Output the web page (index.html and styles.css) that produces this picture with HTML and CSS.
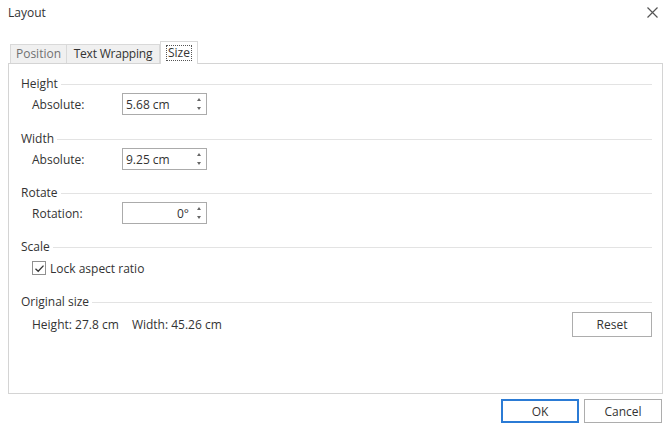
FILE: index.html
```html
<!DOCTYPE html>
<html lang="en">

<head>
    <meta charset="UTF-8">
    <meta name="viewport" content="width=device-width, initial-scale=1.0">
    <title>Layout</title>
    <link rel="stylesheet" href="styles.css">
</head>

<body>
    <div class="dialog">
        <div class="titlebar">
            <span class="title">Layout</span>
            <button class="close" aria-label="Close">
                <svg width="11" height="11" viewBox="0 0 11 11">
                    <path d="M0.5 0.5 L10.5 10.5 M10.5 0.5 L0.5 10.5" stroke="#555" stroke-width="1.2" fill="none" />
                </svg>
            </button>
        </div>

        <div class="tabs">
            <div class="tab position">Position</div>
            <div class="tab wrapping">Text Wrapping</div>
            <div class="tab active"><span class="focus">Size</span></div>
        </div>

        <div class="panel">
            <div class="group">
                <div class="group-title"><span>Height</span></div>
                <div class="row">
                    <label>Absolute:</label>
                    <div class="spin">
                        <span class="value">5.68 cm</span>
                        <span class="arrows"><i class="up"></i><i class="down"></i></span>
                    </div>
                </div>
            </div>

            <div class="group">
                <div class="group-title"><span>Width</span></div>
                <div class="row">
                    <label>Absolute:</label>
                    <div class="spin">
                        <span class="value">9.25 cm</span>
                        <span class="arrows"><i class="up"></i><i class="down"></i></span>
                    </div>
                </div>
            </div>

            <div class="group">
                <div class="group-title"><span>Rotate</span></div>
                <div class="row">
                    <label>Rotation:</label>
                    <div class="spin right">
                        <span class="value">0°</span>
                        <span class="arrows"><i class="up"></i><i class="down"></i></span>
                    </div>
                </div>
            </div>

            <div class="group scale">
                <div class="group-title"><span>Scale</span></div>
                <div class="check-row">
                    <span class="checkbox">
                        <svg width="11" height="11" viewBox="0 0 11 11">
                            <path d="M1.5 5.8 L4.2 8.3 L9.5 2.6" stroke="#333" stroke-width="1.3" fill="none" />
                        </svg>
                    </span>
                    <span>Lock aspect ratio</span>
                </div>
            </div>

            <div class="group original">
                <div class="group-title"><span>Original size</span></div>
                <div class="size-row">
                    <span class="sizes">Height:&nbsp;27.8 cm <span class="gap"></span>Width:&nbsp;45.26 cm</span>
                    <button class="btn reset">Reset</button>
                </div>
            </div>
        </div>

        <div class="footer">
            <button class="btn ok">OK</button>
            <button class="btn">Cancel</button>
        </div>
    </div>
</body>

</html>
```

FILE: styles.css
```css
body {
    margin: 0;
    background: #ffffff;
    font-family: "Open Sans", "Noto Sans", sans-serif;
    font-size: 12px;
    color: #333;
}

.dialog {
    width: 670px;
    height: 428px;
}

.titlebar {
    height: 24px;
    display: flex;
    align-items: center;
    justify-content: space-between;
    padding: 0 12px 0 8px;
}

.title {
    color: #333;
}

.close {
    border: none;
    background: none;
    padding: 0;
    width: 11px;
    height: 11px;
    display: flex;
}

.tabs {
    display: flex;
    align-items: flex-end;
    margin: 17px 0 0 10px;
    height: 22px;
    position: relative;
    z-index: 1;
}

.tab {
    height: 19px;
    line-height: 18px;
    padding: 0 4px;
    background: #f0f0f0;
    border: 1px solid #d9d9d9;
    border-bottom: none;
    box-sizing: border-box;
    color: #333;
    white-space: nowrap;
    text-align: center;
}

.tab.position {
    width: 57px;
    color: #707070;
}

.tab.wrapping {
    width: 93px;
    border-left: none;
    letter-spacing: -0.2px;
}

.tab.active {
    width: 38px;
    height: 23px;
    background: #ffffff;
    margin-bottom: -1px;
    padding: 3px 5px 0 5px;
    line-height: 14px;
}

.focus {
    display: inline-block;
    border: 1px dotted #555;
    padding: 0 1px;
    line-height: 14px;
}

.panel {
    margin-left: 8px;
    width: 655px;
    height: 331px;
    box-sizing: border-box;
    border: 1px solid #d4d4d4;
    padding: 12px 10px 0 12px;
}

.group {
    margin-bottom: 15px;
}

.group:first-child {
    margin-bottom: 16px;
}

.group-title {
    display: flex;
    align-items: center;
    height: 16px;
    line-height: 16px;
}

.group-title::after {
    content: "";
    flex: 1;
    height: 1px;
    background: #e3e3e3;
    margin-left: 3px;
}

.row {
    display: flex;
    align-items: center;
    margin-top: 1px;
    padding-left: 11px;
    height: 22px;
}

.row label {
    width: 90px;
}

.spin {
    width: 85px;
    height: 22px;
    box-sizing: border-box;
    border: 1px solid #ababab;
    display: flex;
    align-items: center;
    padding-left: 3px;
}

.spin .value {
    flex: 1;
}

.spin.right .value {
    text-align: right;
    padding-right: 4px;
}

.arrows {
    width: 12px;
    height: 16px;
    display: flex;
    flex-direction: column;
    align-items: center;
    justify-content: space-between;
    padding: 2px 0;
    box-sizing: border-box;
    margin-right: 1px;
}

.arrows i {
    width: 0;
    height: 0;
    border-left: 2.5px solid transparent;
    border-right: 2.5px solid transparent;
}

.arrows .up {
    border-bottom: 3px solid #666;
}

.arrows .down {
    border-top: 3px solid #666;
}

.group.scale {
    margin-bottom: 18px;
}

.check-row {
    display: flex;
    align-items: center;
    margin-top: 5px;
    padding-left: 11px;
    height: 16px;
}

.checkbox {
    width: 14px;
    height: 14px;
    box-sizing: border-box;
    border: 1px solid #909090;
    display: flex;
    align-items: center;
    justify-content: center;
    margin-right: 4px;
}

.size-row {
    display: flex;
    align-items: center;
    justify-content: space-between;
    padding-left: 11px;
    margin-top: 1px;
    height: 26px;
}

.gap {
    display: inline-block;
    width: 10px;
}

.btn {
    font-family: "Open Sans", "Noto Sans", sans-serif;
    font-size: 12px;
    color: #333;
    background: #ffffff;
    border: 1px solid #adadad;
    width: 80px;
    height: 25px;
    padding: 0;
}

.footer {
    display: flex;
    justify-content: flex-end;
    gap: 5px;
    padding: 5px 8px 0 0;
}

.footer .btn {
    width: 78px;
    height: 24px;
}

.footer .btn.ok {
    border: 2px solid #2b7bd5;
}
```
